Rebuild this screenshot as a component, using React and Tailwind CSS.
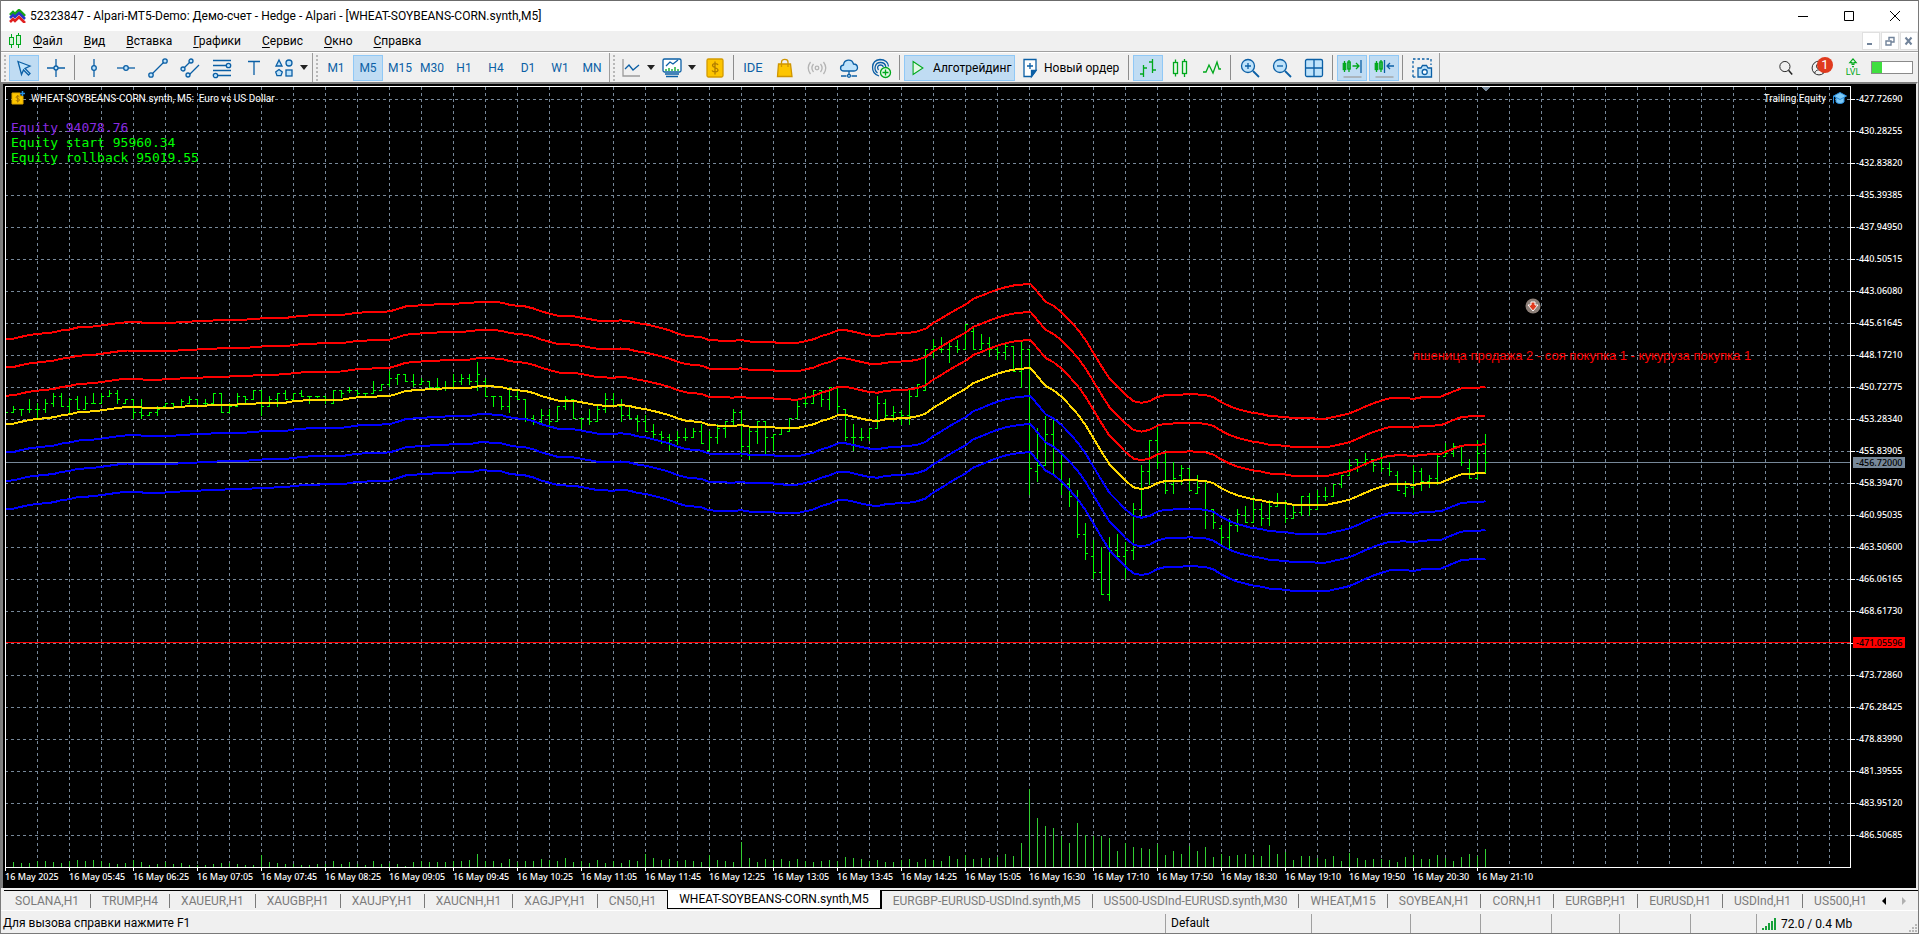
import clsx from 'clsx';

const BLUE = '#0b5fa5';
const SKY = '#bfe3fb';
const GREEN = '#00a81c';

// [high, open, close, low], three units per pixel below the chart origin
const BARS = [
  [427, 427, 427, 427], [408, 427, 418, 430], [418, 418, 418, 438], [387, 418, 418, 430], [400, 418, 418, 447],
  [387, 418, 400, 430], [370, 400, 379, 410], [370, 379, 409, 410], [385, 409, 388, 432], [378, 388, 418, 418],
  [378, 418, 400, 418], [370, 400, 400, 402], [370, 400, 379, 402], [360, 379, 370, 379], [360, 370, 388, 402],
  [388, 400, 388, 402], [388, 388, 427, 447], [387, 427, 436, 447], [427, 436, 427, 438], [408, 427, 418, 438],
  [400, 409, 400, 414], [400, 400, 409, 414], [387, 409, 394, 409], [378, 400, 388, 402], [388, 388, 409, 409],
  [387, 400, 400, 405], [370, 400, 370, 405], [370, 370, 427, 428], [400, 427, 409, 428], [370, 409, 379, 411],
  [379, 379, 388, 402], [361, 388, 361, 388], [361, 361, 409, 438], [378, 409, 388, 411], [370, 388, 370, 411],
  [361, 370, 388, 390], [370, 388, 370, 393], [361, 370, 379, 379], [379, 379, 379, 402], [379, 379, 379, 385],
  [379, 379, 388, 402], [361, 400, 361, 402], [361, 361, 370, 385], [352, 361, 361, 370], [361, 361, 370, 379],
  [370, 370, 370, 379], [333, 370, 361, 370], [343, 361, 343, 361], [303, 343, 325, 352], [313, 325, 313, 345],
  [313, 313, 334, 334], [312, 334, 343, 352], [325, 343, 334, 345], [334, 334, 352, 352], [323, 352, 352, 362],
  [333, 352, 352, 362], [312, 352, 334, 352], [312, 334, 325, 345], [312, 325, 334, 345], [276, 334, 313, 362],
  [325, 334, 379, 379], [379, 379, 379, 411], [379, 379, 409, 420], [352, 409, 379, 429], [361, 379, 388, 388],
  [388, 388, 445, 456], [435, 445, 454, 465], [417, 454, 436, 465], [417, 436, 454, 474], [409, 454, 409, 456],
  [378, 409, 388, 420], [388, 388, 445, 447], [445, 445, 445, 477], [417, 445, 454, 465], [409, 454, 418, 456],
  [369, 418, 388, 430], [369, 388, 409, 411], [387, 409, 436, 456], [410, 436, 445, 447], [435, 445, 454, 486],
  [435, 454, 484, 486], [462, 484, 493, 504], [483, 493, 502, 522], [492, 502, 511, 543], [483, 511, 502, 525],
  [474, 502, 502, 513], [474, 502, 484, 504], [462, 484, 520, 522], [483, 541, 502, 543], [462, 502, 475, 522],
  [454, 475, 454, 504], [417, 454, 427, 465], [420, 427, 529, 561], [472, 529, 484, 570], [454, 484, 454, 522],
  [454, 454, 502, 552], [492, 502, 493, 543], [475, 493, 475, 493], [445, 484, 445, 486], [387, 445, 409, 447],
  [369, 400, 400, 411], [361, 400, 361, 402], [361, 361, 388, 411], [352, 388, 352, 420], [352, 352, 409, 430],
  [418, 418, 502, 513], [462, 502, 502, 543], [474, 502, 502, 513], [475, 502, 475, 513], [378, 475, 400, 477],
  [387, 400, 436, 447], [408, 436, 427, 456], [420, 427, 436, 465], [361, 436, 379, 465], [343, 379, 343, 379],
  [238, 361, 238, 361], [207, 238, 229, 265], [201, 238, 238, 249], [219, 238, 229, 279], [210, 229, 238, 249],
  [162, 238, 163, 238], [174, 184, 238, 240], [192, 238, 220, 240], [201, 220, 238, 261], [229, 238, 247, 270],
  [220, 247, 229, 270], [229, 229, 303, 303], [215, 303, 238, 354], [238, 238, 595, 675], [474, 604, 586, 636],
  [438, 586, 493, 588], [450, 493, 577, 613], [555, 577, 643, 675], [624, 643, 679, 711], [660, 679, 793, 804],
  [759, 793, 850, 870], [810, 859, 907, 927], [831, 907, 973, 975], [801, 973, 841, 993], [792, 841, 859, 861],
  [816, 859, 841, 927], [699, 841, 718, 870], [585, 718, 604, 738], [511, 604, 511, 645], [468, 511, 577, 597],
  [540, 577, 661, 672], [576, 643, 625, 672], [585, 616, 595, 645], [595, 595, 661, 663], [615, 670, 652, 672],
  [634, 634, 718, 777], [718, 718, 757, 777], [765, 775, 802, 822], [744, 802, 766, 837], [717, 766, 733, 786],
  [708, 736, 757, 759], [678, 757, 718, 759], [699, 718, 745, 768], [690, 745, 709, 768], [669, 709, 700, 711],
  [690, 700, 745, 759], [708, 745, 727, 747], [679, 727, 679, 738], [669, 679, 718, 738], [660, 718, 679, 720],
  [651, 679, 679, 693], [642, 679, 643, 681], [616, 643, 616, 654], [567, 616, 586, 618], [567, 568, 577, 606],
  [549, 577, 568, 588], [568, 568, 586, 606], [549, 577, 595, 606], [576, 595, 604, 618], [603, 616, 661, 663],
  [633, 670, 652, 681], [585, 652, 604, 675], [594, 604, 634, 663], [615, 634, 625, 654], [552, 625, 559, 645],
  [519, 559, 550, 561], [519, 550, 529, 561], [529, 529, 577, 588], [567, 595, 625, 627], [510, 625, 550, 627],
  [492, 550, 577, 609],
];

const VOLUMES = [
  5, 5, 4, 4, 6, 6, 5, 4, 6, 7, 6, 7, 6, 4, 3, 4, 7, 5, 2, 3, 5, 3, 4, 2, 2, 2, 3, 4, 4, 3, 2, 2, 12, 5, 4, 3, 3, 2,
  2, 3, 3, 6, 3, 5, 3, 2, 6, 3, 4, 3, 1, 5, 6, 5, 5, 5, 6, 6, 7, 13, 6, 6, 4, 8, 5, 6, 6, 8, 7, 6, 9, 5, 6, 4, 7, 4,
  6, 4, 7, 6, 13, 9, 7, 8, 6, 7, 6, 5, 12, 7, 6, 5, 25, 9, 5, 8, 7, 8, 6, 8, 6, 5, 6, 7, 6, 10, 9, 8, 6, 7, 5, 5, 7,
  8, 5, 8, 7, 6, 11, 8, 12, 8, 9, 9, 10, 13, 11, 24, 78, 49, 41, 39, 31, 24, 44, 32, 31, 31, 29, 16, 24, 20, 19, 18,
  23, 12, 16, 13, 21, 16, 20, 10, 13, 11, 12, 13, 12, 11, 22, 13, 15, 7, 11, 11, 9, 8, 11, 6, 14, 9, 7, 8, 8, 7, 5,
  10, 12, 8, 8, 12, 9, 6, 10, 13, 11, 18,
];

// moving average: [x, y] with y in the same units as the bars
const AVERAGE = [
  [5, 462], [13, 461], [21, 455], [29, 450], [37, 447], [53, 442], [61, 436], [69, 433], [77, 427], [93, 424],
  [103, 420], [117, 414], [127, 411], [140, 411], [143, 414], [172, 413], [180, 410], [197, 408], [217, 405],
  [245, 403], [262, 399], [285, 398], [293, 394], [309, 390], [341, 389], [357, 382], [389, 378], [397, 371],
  [405, 363], [421, 359], [445, 355], [470, 353], [479, 348], [485, 348], [501, 351], [508, 357], [517, 361],
  [525, 363], [533, 369], [541, 378], [558, 392], [573, 393], [581, 397], [597, 406], [613, 408], [620, 405],
  [629, 408], [637, 414], [646, 418], [661, 429], [669, 436], [677, 445], [685, 452], [701, 457], [709, 466],
  [733, 468], [740, 465], [750, 470], [773, 470], [775, 473], [797, 474], [813, 463], [821, 453], [829, 446],
  [838, 435], [845, 435], [853, 440], [861, 446], [869, 451], [877, 453], [885, 448], [893, 446], [909, 443],
  [917, 439], [925, 431], [933, 413], [941, 399], [949, 384], [957, 370], [965, 357], [973, 339], [981, 330],
  [989, 320], [997, 311], [1005, 304], [1013, 299], [1021, 296], [1030, 294], [1037, 319], [1045, 348],
  [1053, 361], [1061, 380], [1069, 405], [1077, 432], [1085, 465], [1093, 505], [1101, 545], [1109, 583],
  [1117, 607], [1125, 632], [1133, 652], [1141, 657], [1149, 652], [1157, 639], [1165, 633], [1180, 632],
  [1189, 630], [1205, 633], [1213, 640], [1221, 655], [1229, 667], [1237, 676], [1251, 687], [1261, 691],
  [1269, 697], [1285, 700], [1293, 704], [1325, 705], [1333, 700], [1341, 695], [1349, 689], [1357, 679],
  [1365, 668], [1373, 658], [1381, 650], [1389, 643], [1405, 642], [1413, 645], [1421, 640], [1440, 638],
  [1445, 632], [1453, 622], [1461, 613], [1469, 611], [1480, 610], [1485, 608],
];

const BANDS = [
  { level: -3, color: '#ff0000' },
  { level: -2, color: '#ff0000' },
  { level: -1, color: '#ff0000' },
  { level: 1, color: '#0000ff' },
  { level: 2, color: '#0000ff' },
  { level: 3, color: '#0000ff' },
  { level: 0, color: '#ffd700' },
];

const PRICES = Array.from({ length: 24 }, (_, i) => (-427.7269 - i * 2.55565).toFixed(5));

const TIMES = [
  '2025', '05:45', '06:25', '07:05', '07:45', '08:25', '09:05', '09:45', '10:25', '11:05', '11:45', '12:25',
  '13:05', '13:45', '14:25', '15:05', '16:30', '17:10', '17:50', '18:30', '19:10', '19:50', '20:30', '21:10',
];

const MENU = ['Файл', 'Вид', 'Вставка', 'Графики', 'Сервис', 'Окно', 'Справка'];

const TIMEFRAMES = ['M1', 'M5', 'M15', 'M30', 'H1', 'H4', 'D1', 'W1', 'MN'];

const TABS = [
  'SOLANA,H1', 'TRUMP,H4', 'XAUEUR,H1', 'XAUGBP,H1', 'XAUJPY,H1', 'XAUCNH,H1', 'XAGJPY,H1', 'CN50,H1',
  'WHEAT-SOYBEANS-CORN.synth,M5', 'EURGBP-EURUSD-USDInd.synth,M5', 'US500-USDInd-EURUSD.synth,M30', 'WHEAT,M15',
  'SOYBEAN,H1', 'CORN,H1', 'EURGBP,H1', 'EURUSD,H1', 'USDInd,H1', 'US500,H1',
];
const ACTIVE_TAB = 8;

const barX = (i) => 5 + 8 * i;

const barsPath = BARS.map(([high, open, close, low], i) => {
  const x = barX(i);
  const o = 270 + Math.floor(open / 3);
  const c = 270 + Math.floor(close / 3);
  const top = Math.min(270 + Math.round(high / 3), o, c) - 0.5;
  const bottom = Math.max(269 + Math.round(low / 3), o, c) + 0.5;
  return `M${x} ${top}V${bottom}M${x - 2.5} ${o}H${x + 0.5}M${x - 0.5} ${c}H${x + 2.5}`;
}).join('');

const volumePath = VOLUMES.map((v, i) => `M${barX(i)} 866.5v${-v}`).join('');

const bandPath = (level) =>
  'M' +
  AVERAGE.map(([x, y]) => {
    const spread = 84.1 + (y - 294) * 0.0056;
    return `${x} ${(269.5 + (y + level * spread) / 3).toFixed(1)}`;
  }).join('L');

/* ---------- toolbar pieces ---------- */

const Icon = ({ children, className = 'w-[22px] h-[22px]', stroke = BLUE, fill = 'none', box = '0 0 22 22' }) => (
  <svg viewBox={box} className={clsx('shrink-0', className)} fill={fill} stroke={stroke} strokeWidth="1.3">
    {children}
  </svg>
);

const Tool = ({ label, active, children }) => (
  <button
    type="button"
    aria-label={label}
    aria-pressed={active}
    className={clsx(
      'mr-0.5 flex h-[26px] w-[30px] shrink-0 items-center justify-center border',
      active ? 'border-[#90c8f6] bg-[#c0dcf3]' : 'border-transparent'
    )}
  >
    {children}
  </button>
);

const DropTool = ({ label, children }) => (
  <button type="button" aria-label={label} className="flex h-[26px] w-[41px] shrink-0 items-center gap-[5px] pl-0.5">
    {children}
    <svg viewBox="0 0 8 5" className="h-[5px] w-2" fill="#222">
      <path d="M0 0h8L4 5z" />
    </svg>
  </button>
);

const Separator = () => <div className="ml-px mr-1 h-[25px] w-px shrink-0 bg-[#8c8c8c]" />;

const GroupEnd = () => <div className="w-px shrink-0 self-stretch bg-[#9d9d9d]" />;

const Grip = () => (
  <svg className="mx-[3px] h-[26px] w-0.5 shrink-0" fill="#b8b8b8" shapeRendering="crispEdges">
    {[0, 4, 8, 12, 16, 20, 24].map((y) => (
      <rect key={y} y={y} width="2" height="2" />
    ))}
  </svg>
);

const TitleBar = () => (
  <header className="flex h-[31px] items-center border-t border-[#6b6b6b] bg-white pl-2 text-xs text-black">
    <svg viewBox="0 0 17 14" className="h-[14px] w-[17px]" fill="none" strokeWidth="2.6">
      <path d="M1 6l3-3 2 2 4-4 3 3 3 3" stroke="#16a516" />
      <path d="M1 9l3-3 2 2 4-4 3 3 3 3" stroke="#2a35c8" />
      <path d="M1 13l3-3 2 2 4-4 3 3 3 3" stroke="#e02020" />
    </svg>
    <h1 className="ml-1 flex-1 whitespace-nowrap">
      52323847 - Alpari-MT5-Demo: Демо-счет - Hedge - Alpari - [WHEAT-SOYBEANS-CORN.synth,M5]
    </h1>
    <div className="flex h-full">
      {[
        ['Свернуть', 'M0 5.5h10'],
        ['Развернуть', 'M.5.5h9v9h-9z'],
        ['Закрыть', 'M0 0l10 10M10 0L0 10'],
      ].map(([label, d]) => (
        <button key={label} type="button" aria-label={label} className="flex w-[46px] items-center justify-center">
          <svg viewBox="0 0 10 10" className="h-2.5 w-2.5" fill="none" stroke="#000">
            <path d={d} />
          </svg>
        </button>
      ))}
    </div>
  </header>
);

const MenuBar = () => (
  <nav className="flex h-5 items-center bg-[#f0f0f0] pl-[7px] text-xs text-black">
    <svg viewBox="0 0 14 16" className="h-4 w-[14px]" fill="#d6f5d9" stroke={GREEN}>
      <path d="M3.5 1v14M10.5 0v15" />
      <rect x="1.5" y="4.5" width="4" height="7" />
      <rect x="8.5" y="2.5" width="4" height="9" />
    </svg>
    {MENU.map((item) => (
      <button key={item} type="button" className="pl-[11px] pr-2.5">
        <span className="underline underline-offset-2">{item[0]}</span>
        {item.slice(1)}
      </button>
    ))}
    <div className="ml-auto flex gap-px">
      {[
        ['Свернуть окно', 'M1 8h5', 2],
        ['Восстановить окно', 'M1 5h5v4H1zM4 4V1.500h5V6H6', 1.4],
        ['Закрыть окно', 'M1.500 1.500l6 7M7.500 1.500l-6 7', 2],
      ].map(([label, d, width]) => (
        <button
          key={label}
          type="button"
          aria-label={label}
          className="flex h-[18px] w-[18px] items-center justify-center border border-[#e0e0e0] bg-white"
        >
          <svg viewBox="0 0 10 10" className="h-2.5 w-2.5" fill="none" stroke="#71839a" strokeWidth={width}>
            <path d={d} />
          </svg>
        </button>
      ))}
    </div>
  </nav>
);

const DrawingTools = () => (
  <>
    <Tool label="Курсор" active>
      <Icon fill={SKY}>
        <path d="M5 4.500l12 4.500-5 2.500 5 5-1.500 1.500-5-5-2 4.500z" />
      </Icon>
    </Tool>
    <Tool label="Перекрестие">
      <Icon>
        <path d="M11 2v7M11 13v7M2 11h7M13 11h7" />
        <circle cx="11" cy="11" r="2" fill={SKY} />
      </Icon>
    </Tool>
    <Separator />
    <Tool label="Вертикальная линия">
      <Icon>
        <path d="M11 2v18" />
        <circle cx="11" cy="11" r="2.300" fill={SKY} />
      </Icon>
    </Tool>
    <Tool label="Горизонтальная линия">
      <Icon>
        <path d="M2 11h18" />
        <circle cx="11" cy="11" r="2.300" fill={SKY} />
      </Icon>
    </Tool>
    <Tool label="Трендовая линия">
      <Icon>
        <path d="M4 18L18 4" />
        <circle cx="4" cy="18" r="2.200" fill={SKY} />
        <circle cx="18" cy="4" r="2.200" fill={SKY} />
      </Icon>
    </Tool>
    <Tool label="Канал">
      <Icon>
        <path d="M4 12l8-8M9 19L20 8" />
        <circle cx="4" cy="12" r="2" fill={SKY} />
        <circle cx="12" cy="4" r="2" fill={SKY} />
        <circle cx="9" cy="18" r="2" fill={SKY} />
      </Icon>
    </Tool>
    <Tool label="Уровни Фибоначчи">
      <Icon>
        <path d="M2 3.500h18M2 8.500h18M2 13.500h18M2 18.500h18" />
        <circle cx="17.500" cy="8.500" r="2.200" fill={SKY} />
        <circle cx="4.500" cy="18.500" r="2.200" fill={SKY} />
      </Icon>
    </Tool>
    <Tool label="Текст">
      <Icon>
        <path d="M5 4.500h12M11 4.500V18" />
      </Icon>
    </Tool>
    <DropTool label="Фигуры">
      <Icon fill={SKY}>
        <path d="M6 3l3 6H3z" />
        <circle cx="16" cy="6" r="3" />
        <path d="M6 12.500l3.300 2.500-1.300 3.700H4L2.700 15z" />
        <rect x="13" y="13" width="6" height="6" />
      </Icon>
    </DropTool>
  </>
);

const ChartTools = () => (
  <>
    <DropTool label="Тип графика">
      <Icon>
        <path d="M3 2v17h17" stroke="#9a9a9a" />
        <path d="M5 12l4-4 4 5 6-5" />
      </Icon>
    </DropTool>
    <DropTool label="Индикаторы">
      <Icon>
        <rect x="2" y="2" width="18" height="13" rx="1.500" fill="#fff" />
        <path d="M5 9l4-4 3 2 5-4M4 17h14M5 19.500h12" />
        <path d="M5 14v-2M8 14v-3M11 14v-2M14 14v-4M17 14v-2" stroke={GREEN} />
      </Icon>
    </DropTool>
    <Tool label="Котировки">
      <Icon stroke="#d39a00">
        <rect x="3" y="2" width="16" height="18" rx="1.500" fill="#fdc500" />
        <path
          d="M14 8c-.500-1.800-5.500-2-5.500.500s5.500 2 5.500 4.500-5 2.500-6 .500M11 4.500v13"
          stroke="#b07c00"
        />
      </Icon>
    </Tool>
    <Separator />
    <Tool label="MetaEditor">
      <span className="text-[13px] text-[#0b5fa5]">IDE</span>
    </Tool>
    <Tool label="Маркет">
      <Icon stroke="#cf9500">
        <path d="M4.500 7h12l1.500 12.500H3.500z" fill="#fdc500" />
        <path d="M7.500 10V5c0-3.500 6.500-3.500 6.500 0v5" />
      </Icon>
    </Tool>
    <Tool label="Сигналы">
      <Icon stroke="#b4b4b4">
        <circle cx="11" cy="11" r="1.800" />
        <path d="M7.500 7c-2 2.500-2 5.500 0 8M14.500 7c2 2.500 2 5.500 0 8M4.500 5c-3 4-3 8 0 12M17.500 5c3 4 3 8 0 12" />
      </Icon>
    </Tool>
    <Tool label="VPS">
      <Icon>
        <path d="M6 14c-4.500 0-4.500-5.500-.500-6 .500-6 8.500-6.500 10-1 5 0 5.500 7 .500 7z" fill={SKY} />
        <path d="M11 14v4M3 19h5.500M13.500 19H19" />
        <circle cx="11" cy="18.800" r="1.500" fill={SKY} />
      </Icon>
    </Tool>
    <Tool label="Публичные сигналы">
      <Icon>
        <path d="M9 19c-9-3-8.500-15.500 1-16.500 5 0 8.500 3 8.500 7M7.500 16c-4.500-3.500-2.500-10.500 3-10.500 3 0 5 2 5.300 4.500M8.500 13c-2-2.500-.500-5 2-5 1.500 0 2.500.800 2.700 2" />
        <circle cx="15.500" cy="15.500" r="5" fill="#e4f9e6" stroke={GREEN} />
        <path d="M12.500 15.500h6M15.500 12.500v6" stroke={GREEN} />
      </Icon>
    </Tool>
    <Separator />
    <button
      type="button"
      aria-pressed="true"
      className="mr-0.5 flex h-[26px] w-[111px] shrink-0 items-center gap-1.5 whitespace-nowrap border border-[#90c8f6] bg-[#c0dcf3] pl-1 text-xs text-black"
    >
      <Icon className="h-[18px] w-[18px]" stroke={GREEN}>
        <path d="M5 3l12 8-12 8z" fill="#e4f9e6" />
      </Icon>
      Алготрейдинг
    </button>
    <button
      type="button"
      className="flex h-[26px] w-[110px] shrink-0 items-center gap-[3px] whitespace-nowrap pl-0.5 text-xs text-black"
    >
      <Icon>
        <path d="M5 2.500h12v11l-4.500 6H5z" fill="#fff" />
        <path d="M17 13.500h-4.500v6z" fill={BLUE} />
        <path d="M11 6v6M8 9h6" />
      </Icon>
      Новый ордер
    </button>
    <Separator />
    <Tool label="Бары" active>
      <Icon stroke={GREEN}>
        <path d="M6.500 8v12M3 17h3.500M6.500 11H10M15.500 2v14M12 5h3.500M15.500 13H19" />
      </Icon>
    </Tool>
    <Tool label="Свечи">
      <Icon stroke={GREEN}>
        <path d="M6.500 2.500v17M15.500 2v18" />
        <rect x="4.500" y="5.500" width="4" height="11" fill="#e4f9e6" />
        <rect x="13.500" y="4.500" width="4" height="12" fill="#e4f9e6" />
      </Icon>
    </Tool>
    <Tool label="Линия">
      <Icon stroke={GREEN}>
        <path d="M2 15h3l3-7 4 8 4-11 2 7h2" />
      </Icon>
    </Tool>
    <Separator />
    <Tool label="Увеличить">
      <Icon>
        <path d="M14 14l6 6" strokeWidth="1.800" />
        <circle cx="9" cy="9" r="6.500" fill={SKY} />
        <path d="M6 9h6M9 6v6" />
      </Icon>
    </Tool>
    <Tool label="Уменьшить">
      <Icon>
        <path d="M14 14l6 6" strokeWidth="1.800" />
        <circle cx="9" cy="9" r="6.500" fill={SKY} />
        <path d="M6 9h6" />
      </Icon>
    </Tool>
    <Tool label="Упорядочить окна">
      <Icon>
        <rect x="2.500" y="2.500" width="17" height="17" rx="1.500" fill={SKY} />
        <path d="M11 2.500v17M2.500 11h17" />
      </Icon>
    </Tool>
    <Separator />
    <Tool label="Автопрокрутка" active>
      <Icon stroke={GREEN}>
        <path d="M3.500 4v11M8 3v12" />
        <rect x="2.300" y="6.500" width="2.400" height="6" />
        <rect x="6.800" y="5" width="2.400" height="7" />
        <path d="M11.500 9h6M15 6l3 3-3 3" />
        <path d="M20 3v13" stroke={BLUE} />
        <path d="M2.500 20h18" stroke="#a0a0a0" />
      </Icon>
    </Tool>
    <Tool label="Сдвиг графика" active>
      <Icon stroke={GREEN}>
        <path d="M3.500 4v11M8 3v12" />
        <rect x="2.300" y="6.500" width="2.400" height="6" />
        <rect x="6.800" y="5" width="2.400" height="7" />
        <path d="M11.500 3v13M21 9h-6.500M17 6l-3 3 3 3" stroke={BLUE} />
        <path d="M2.500 20h18" stroke="#a0a0a0" />
      </Icon>
    </Tool>
    <Separator />
    <Tool label="Снимок экрана">
      <Icon>
        <path d="M2 20V2h18v6" strokeDasharray="2.500 2" />
        <path d="M2 20h4" strokeDasharray="2.500 2" />
        <path d="M7 11h3l1.500-2.500h4L17 11h3.500v9H7z" fill={SKY} />
        <circle cx="13.700" cy="15" r="2.500" fill="#fff" />
      </Icon>
    </Tool>
  </>
);

const Toolbar = () => (
  <div className="border-t border-[#a0a0a0] bg-[#f0f0f0]">
    <div className="flex h-[30px] items-center border-t border-white">
      <Grip />
      <DrawingTools />
      <GroupEnd />
      <Grip />
      {TIMEFRAMES.map((tf) => (
        <Tool key={tf} label={tf} active={tf === 'M5'}>
          <span className="text-xs text-[#0b5fa5]">{tf}</span>
        </Tool>
      ))}
      <GroupEnd />
      <Grip />
      <ChartTools />
      <GroupEnd />

      <div className="ml-auto flex items-center pr-[5px]">
        <Tool label="Поиск">
          <Icon stroke="#222" className="h-4 w-4">
            <circle cx="9.500" cy="9" r="7" />
            <path d="M14.500 14l5 6" strokeWidth="2" />
          </Icon>
        </Tool>
        <button type="button" aria-label="Профиль" className="relative flex h-[26px] w-8 items-center justify-center">
          <Icon stroke="#222" className="h-4 w-4">
            <circle cx="11" cy="11" r="9.500" />
            <circle cx="11" cy="8.500" r="3.500" />
            <path d="M5 18c1.500-6 10.500-6 12 0" />
          </Icon>
          <span className="absolute right-0.5 top-0.5 h-4 w-4 rounded-full bg-[#e03a1e] text-center text-[13px] leading-4 text-white">
            1
          </span>
        </button>
        <button type="button" className="flex w-9 flex-col items-center text-[9px] leading-[9px] text-[#00a81c]">
          <Icon box="0 0 10 11" className="h-2.5 w-2.5" stroke={GREEN} fill="#e4f9e6">
            <path d="M5 1L1.500 5H4v2h2V5h2.500zM4 9.500h2" />
          </Icon>
          LVL
        </button>
        <div className="h-[13px] w-[42px] border border-[#8a8a8a] bg-white">
          <div className="h-full w-1/4 bg-[#3fdf3f]" />
        </div>
      </div>
    </div>
  </div>
);

/* ---------- chart ---------- */

const Plot = () => (
  // the shift puts whole coordinates on pixel centres of the window
  <svg className="absolute inset-0 h-full w-full" shapeRendering="crispEdges" fill="none">
    <g transform="translate(-5.5 -86.5)">
      <g stroke="#778899" strokeDasharray="3 3">
        {PRICES.map((p, i) => (
          <path key={p} d={`M4.5 ${99 + 32 * i}H1850`} />
        ))}
        {Array.from({ length: 57 }, (_, i) => (
          <path key={i} d={`M${37 + 32 * i} 86.5V867`} />
        ))}
      </g>
      <path d={volumePath} stroke="#32cd32" />
      <path d="M5 462H1850" stroke="#778899" />
      <path d={barsPath} stroke="#00ff00" />
      {BANDS.map(({ level, color }) => (
        <path key={level} d={bandPath(level)} stroke={color} strokeWidth="2" />
      ))}
      <path d="M5 642H1850" stroke="#ff0000" />
      <path d="M1481 86.500h9l-4.500 5z" fill="#778899" />
    </g>
    <g transform="translate(1527 219)" shapeRendering="auto">
      <circle r="7.500" fill="#8d8079" />
      <path d="M-2-4h4v3h3L0 5-5-1h3z" fill="#e03a1e" stroke="#fff" />
    </g>
  </svg>
);

const Chart = () => (
  <main className="flex min-h-0 flex-1 flex-col border-l-2 border-r-2 border-t-2 border-l-[#7f7f7f] border-r-[#e8e8e8] border-t-[#7f7f7f] bg-black font-['Noto_Sans',sans-serif] text-[9px] font-medium text-white">
    <div className="flex min-h-0 flex-1">
      <section className="relative ml-0.5 mt-0.5 flex-1 overflow-hidden border border-white">
        <Plot />
        <div className="absolute left-[5px] top-[3px] whitespace-nowrap font-normal">
          <div className="flex h-4 items-center gap-1.5">
            <svg viewBox="0 0 14 14" className="h-[14px] w-[14px]">
              <path d="M1 2h8v3h3v8H1z" fill="#fdc500" stroke="#e0a800" />
              <path d="M8.500 6c-.500-1.200-3.500-1.200-3.500.200s3.500 1.200 3.500 2.800-3 1.500-3.500.200M6.700 4v7.500" fill="none" stroke="#a87400" />
              <path d="M11.500 0v5M9 2.500h5" stroke="#2a8fe0" strokeWidth="1.500" />
            </svg>
            <span className="font-[Roboto,sans-serif] text-[10px]">
              WHEAT-SOYBEANS-CORN.synth, M5:&nbsp; Euro vs US Dollar
            </span>
          </div>
          <div className="mt-[14px] font-['DejaVu_Sans_Mono',monospace] text-[13px] leading-[15px] text-[#00ff00]">
            <p className="text-[#8a2be2]">Equity 94078.76</p>
            <p>Equity start 95960.34</p>
            <p>Equity rollback 95019.55</p>
          </div>
        </div>
        <div className="absolute right-[3px] top-[3px] flex h-4 items-center gap-1.5 font-[Roboto,sans-serif] text-[10px] font-normal">
          Trailing Equity
          <svg viewBox="0 0 15 14" className="h-[14px] w-[15px]" fill="#7cc8f5" stroke="#2a8fe0">
            <path d="M4 6v5c2 2 6 2 8 0V6" />
            <path d="M8 1.500l6.500 3.500L8 8.500 1.500 5z" />
            <path d="M1.500 5v7.500" />
          </svg>
        </div>
        <p className="absolute left-[1407px] top-[261px] whitespace-nowrap font-['Liberation_Sans',sans-serif] text-[13px] font-normal leading-4 text-[#ff0000]">
          пшеница продажа 2 - соя покупка 1 - кукуруза покупка 1
        </p>
      </section>

      <div className="relative w-[65px] shrink-0 overflow-hidden">
        <ol className="pt-[7px]">
          {PRICES.map((price) => (
            <li key={price} className="flex h-8">
              <div className="flex h-4 items-center gap-px leading-4">
                <span className="h-px w-1 bg-white" />
                {price}
              </div>
            </li>
          ))}
        </ol>
        <div className="absolute left-0.5 top-[373px] w-[52px] bg-[#778899] pl-[3px] leading-[11px] text-black">-456.72000</div>
        <div className="absolute left-0.5 top-[553px] w-[52px] bg-[#ff0000] pl-[3px] leading-[11px] text-black">-471.05596</div>
      </div>
    </div>

    <ol className="flex h-5 shrink-0 overflow-hidden pl-0.5">
      {TIMES.map((time) => (
        <li key={time} className="w-16 shrink-0 whitespace-nowrap leading-3">
          <div className="h-[3px] w-px bg-white" />
          16 May {time}
        </li>
      ))}
    </ol>
  </main>
);

/* ---------- bottom ---------- */

const ChartTabs = () => (
  <div className="border-b border-white bg-[#f0f0f0] pt-0.5">
    <div className="flex h-5 overflow-hidden pl-[3px] text-xs text-[#7a7a7a]">
      {TABS.map((tab, i) =>
        i === ACTIVE_TAB ? (
          <button
            key={tab}
            type="button"
            className="h-[19px] shrink-0 whitespace-nowrap border-b border-l border-r-2 border-black bg-white px-[11px] text-black"
          >
            {tab}
          </button>
        ) : (
          <button key={tab} type="button" className="flex shrink-0 items-center whitespace-nowrap border-t border-black">
            <span
              className={clsx(
                'px-[11px] leading-[14px]',
                i !== ACTIVE_TAB - 1 && i !== TABS.length - 1 && 'border-r border-[#7a7a7a]'
              )}
            >
              {tab}
            </span>
          </button>
        )
      )}
      <div className="flex flex-1 items-center justify-end gap-4 border-t border-black pr-3">
        <svg viewBox="0 0 4 8" className="h-2 w-1" fill="#000">
          <path d="M4 0v8L0 4z" />
        </svg>
        <svg viewBox="0 0 4 8" className="h-2 w-1" fill="#b0b0b0">
          <path d="M0 0v8l4-4z" />
        </svg>
      </div>
    </div>
  </div>
);

const StatusBar = () => (
  <footer className="flex h-[22px] items-stretch bg-[#f0f0f0] pt-[3px] text-xs leading-[18px] text-black">
    <div className="flex-1 pl-0.5">Для вызова справки нажмите F1</div>
    <div className="w-[146px] border-l border-[#a0a0a0] pl-[5px]">Default</div>
    <div className="w-[99px] border-l border-[#a0a0a0]" />
    <div className="w-[70px] border-l border-[#a0a0a0]" />
    <div className="w-[71px] border-l border-[#a0a0a0]" />
    <div className="w-[68px] border-l border-[#a0a0a0]" />
    <div className="w-[71px] border-l border-[#a0a0a0]" />
    <div className="w-[66px] border-l border-[#a0a0a0]" />
    <div className="flex w-[162px] items-center gap-[5px] border-l border-[#a0a0a0] pl-[5px]">
      <svg viewBox="0 0 14 12" className="h-3 w-[14px]" fill="#17a03a" shapeRendering="crispEdges">
        <path d="M0 10h2v2H0zM3 8h2v4H3zM6 5h2v7H6zM9 3h2v9H9zM12 0h2v12h-2z" />
      </svg>
      <span className="flex-1">72.0 / 0.4 Mb</span>
      <svg viewBox="0 0 9 9" className="h-[9px] w-[9px] self-end" fill="#b8b8b8" shapeRendering="crispEdges">
        <path d="M6 0h2v2H6zM6 3h2v2H6zM6 6h2v2H6zM3 3h2v2H3zM3 6h2v2H3zM0 6h2v2H0z" />
      </svg>
    </div>
  </footer>
);

const App = () => (
  <div className="flex h-screen flex-col overflow-hidden border-x border-b border-[#7a7a7a] bg-[#f0f0f0] font-[Roboto,sans-serif]">
    <TitleBar />
    <MenuBar />
    <Toolbar />
    <Chart />
    <ChartTabs />
    <StatusBar />
  </div>
);

export default App;
